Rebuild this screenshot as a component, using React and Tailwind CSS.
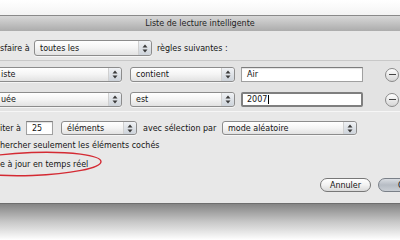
import React from 'react'

function Arrows() {
  return (
    <svg width="6" height="9" viewBox="0 0 6 9" className="shrink-0">
      <path d="M3 0.5 L5.5 3.5 L0.5 3.5 Z" fill="#3a3a3a" />
      <path d="M3 8.5 L5.5 5.5 L0.5 5.5 Z" fill="#3a3a3a" />
    </svg>
  )
}

function Select({ label, className = '' }) {
  return (
    <div className={`flex items-center h-full rounded-[3px] border border-[#8c8c8c] bg-gradient-to-b from-white via-[#f4f4f4] to-[#e2e2e2] shadow-[0_1px_0_rgba(255,255,255,0.6)] ${className}`}>
      <span className="flex-1 pl-[5px] whitespace-nowrap leading-[11px]">{label}</span>
      <div className="h-full w-[13px] flex items-center justify-center border-l border-[#d0d0d0] bg-gradient-to-b from-[#f0f2f5] to-[#cdd3da] rounded-r-[3px]">
        <Arrows />
      </div>
    </div>
  )
}

function Field({ value, focus = false, className = '' }) {
  if (focus) {
    return (
      <div className={`flex items-center h-full bg-white border-2 border-[#7f7f7f] rounded-[2px] pl-[4px] ${className}`}>
        <span>{value}</span>
        <span className="w-px h-[9px] bg-black ml-px" />
      </div>
    )
  }
  return (
    <div className={`flex items-center h-full bg-white border border-[#a0a0a0] border-t-[#7c7c7c] shadow-[inset_0_1px_1px_rgba(0,0,0,0.12)] pl-[5px] ${className}`}>
      <span>{value}</span>
    </div>
  )
}

function Minus() {
  return (
    <div className="w-[14px] h-[14px] rounded-full border border-[#8a8a8a] bg-gradient-to-b from-white to-[#d6d6d6] flex items-center justify-center">
      <div className="w-[7px] h-[1.5px] bg-[#444]" />
    </div>
  )
}

export default function App() {
  return (
    <div className="w-[400px] h-[240px] bg-white overflow-hidden relative font-['DejaVu_Sans',sans-serif] text-[8px] text-[#141414] leading-[11px]">
      <div className="h-[15px] bg-gradient-to-b from-white to-[#f4f4f4]" />
      <div className="h-[16px] border-t border-[#8a8a8a] bg-gradient-to-b from-[#d8d8d8] to-[#acacac] flex items-center justify-center text-[#1e1e1e]">
        Liste de lecture intelligente
      </div>

      <div className="h-[172px] bg-[#e8e8e8] pt-[9px] flex flex-col">
        <div className="h-[16px] flex items-center">
          <span className="w-[34px]">sfaire à</span>
          <Select label="toutes les" className="w-[118px]" />
          <span className="ml-[5px]">règles suivantes :</span>
        </div>

        <div className="mt-[4px] h-[52px] border-y border-t-[#c8c8c8] border-b-[#f6f6f6] bg-[#e3e3e3] flex flex-col pt-[6px] gap-[10px]">
          <div className="h-[15px] flex items-center">
            <Select label="iste" className="w-[128px] -ml-[6px] pl-[1px]" />
            <Select label="contient" className="w-[105px] ml-[8px]" />
            <Field value="Air" className="w-[122px] ml-[6px]" />
            <div className="ml-[22px]"><Minus /></div>
          </div>
          <div className="h-[15px] flex items-center">
            <Select label="uée" className="w-[128px] -ml-[6px] pl-[1px]" />
            <Select label="est" className="w-[105px] ml-[8px]" />
            <Field value="2007" focus className="w-[122px] ml-[6px]" />
            <div className="ml-[22px]"><Minus /></div>
          </div>
        </div>

        <div className="mt-[9px] h-[14px] flex items-center">
          <span className="w-[26px]">iter à</span>
          <Field value="25" className="w-[27px]" />
          <Select label="éléments" className="w-[76px] ml-[8px]" />
          <span className="ml-[6px] w-[79px]">avec sélection par</span>
          <Select label="mode aléatoire" className="w-[135px]" />
        </div>

        <div className="mt-[5px] h-[10px] flex items-center">
          <span>hercher seulement les éléments cochés</span>
        </div>

        <div className="mt-[9px] h-[10px] flex items-center">
          <span>e à jour en temps réel</span>
        </div>

        <div className="mt-[9px] h-[14px] flex items-center justify-end">
          <div className="w-[51px] h-full rounded-full border border-[#777] bg-gradient-to-b from-white via-[#f2f2f2] to-[#d9d9d9] flex items-center justify-center">
            Annuler
          </div>
          <div className="w-[40px] h-full ml-[7px] -mr-[18px] rounded-full border border-[#7a8088] bg-gradient-to-b from-[#d9dde2] via-[#b6bcc4] to-[#c9ced4] flex items-center pl-[19px]">
            OK
          </div>
        </div>
      </div>

      <div className="h-[37px] border-t border-[#6e6e6e] bg-gradient-to-b from-[#858585] via-[#c8c8c8] to-white" />

      <svg className="absolute left-0 top-0 pointer-events-none" width="400" height="240">
        <ellipse cx="32" cy="164" rx="69" ry="11.5" fill="none" stroke="#d42a33" strokeWidth="1.4" transform="rotate(-2 32 164)" />
      </svg>
    </div>
  )
}
